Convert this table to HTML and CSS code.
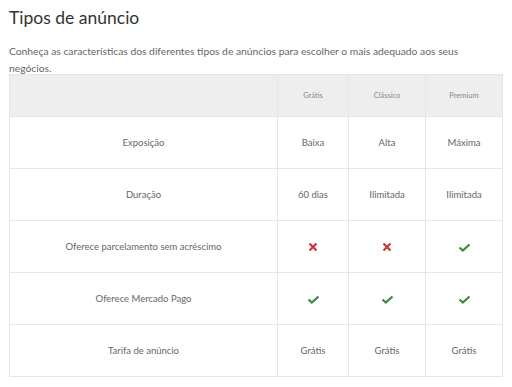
FILE: index.html
```html
<!DOCTYPE html>
<html lang="pt-BR">
<head>
    <meta charset="UTF-8">
    <title>Tipos de anúncio</title>
    <link rel="stylesheet" href="styles.css">
</head>
<body>
    <div class="page">
        <h2>Tipos de anúncio</h2>
        <p class="intro">Conheça as características dos diferentes tipos de anúncios para escolher o mais adequado aos seus negócios.</p>

        <table class="plans">
            <thead>
                <tr>
                    <th class="feature"></th>
                    <th class="c1">Grátis</th>
                    <th class="c2">Clássico</th>
                    <th class="c3">Premium</th>
                </tr>
            </thead>
            <tbody>
                <tr>
                    <td class="feature">Exposição</td>
                    <td>Baixa</td>
                    <td>Alta</td>
                    <td>Máxima</td>
                </tr>
                <tr>
                    <td class="feature">Duração</td>
                    <td>60 dias</td>
                    <td>Ilimitada</td>
                    <td>Ilimitada</td>
                </tr>
                <tr>
                    <td class="feature">Oferece parcelamento sem acréscimo</td>
                    <td><svg class="icon no" viewBox="0 0 10 10"><path d="M1.5 1.5 L8.5 8.5 M8.5 1.5 L1.5 8.5"/></svg></td>
                    <td><svg class="icon no" viewBox="0 0 10 10"><path d="M1.5 1.5 L8.5 8.5 M8.5 1.5 L1.5 8.5"/></svg></td>
                    <td><svg class="icon yes" viewBox="0 0 13 9"><path d="M1.5 4.5 L4.8 7.5 L11.5 1.5"/></svg></td>
                </tr>
                <tr>
                    <td class="feature">Oferece Mercado Pago</td>
                    <td><svg class="icon yes" viewBox="0 0 13 9"><path d="M1.5 4.5 L4.8 7.5 L11.5 1.5"/></svg></td>
                    <td><svg class="icon yes" viewBox="0 0 13 9"><path d="M1.5 4.5 L4.8 7.5 L11.5 1.5"/></svg></td>
                    <td><svg class="icon yes" viewBox="0 0 13 9"><path d="M1.5 4.5 L4.8 7.5 L11.5 1.5"/></svg></td>
                </tr>
                <tr>
                    <td class="feature">Tarifa de anúncio</td>
                    <td>Grátis</td>
                    <td>Grátis</td>
                    <td>Grátis</td>
                </tr>
            </tbody>
        </table>
    </div>
</body>
</html>
```

FILE: styles.css
```css
body {
    margin: 0;
    font-family: Lato, Arial, sans-serif;
    background-color: white;
    color: #666;
}

.page {
    padding: 7px 9px 0 9px;
}

h2 {
    margin: 0;
    font-size: 17.5px;
    font-weight: normal;
    line-height: 22px;
    color: #333;
}

.intro {
    margin: 14px 0 -3px 0;
    font-size: 10.3px;
    line-height: 17px;
    color: #666;
}

.plans {
    width: 494px;
    border-collapse: collapse;
    table-layout: fixed;
    border: 1px solid #e6e6e6;
}

.plans th, .plans td {
    border: 1px solid #e6e6e6;
    text-align: center;
    padding: 0;
}

.plans th {
    height: 41px;
    background-color: #eeeeee;
    font-size: 7.5px;
    font-weight: normal;
    color: #888;
}

.plans td {
    height: 51px;
    font-size: 9.5px;
    color: #666;
}

.plans .feature {
    width: 267px;
}

.plans .c1 {
    width: 70px;
}

.plans .c2 {
    width: 76px;
}

.icon {
    display: inline-block;
    vertical-align: middle;
    fill: none;
    stroke-width: 2.2;
}

.icon.no {
    width: 10px;
    height: 10px;
    stroke: #c9363d;
}

.icon.yes {
    width: 13px;
    height: 9px;
    stroke: #3a8a3f;
}
```
